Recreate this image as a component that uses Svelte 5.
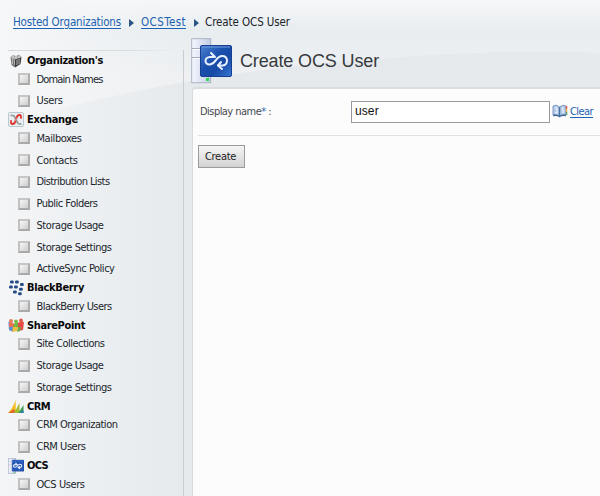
<script>
  const groups = [
    { name: "Organization's", icon: 'org', width: 76, items: [['Domain Names', 66], ['Users', 26]] },
    { name: 'Exchange', icon: 'exchange', width: 51, items: [['Mailboxes', 45], ['Contacts', 41], ['Distribution Lists', 73], ['Public Folders', 61], ['Storage Usage', 67], ['Storage Settings', 75], ['ActiveSync Policy', 78]] },
    { name: 'BlackBerry', icon: 'blackberry', width: 57, items: [['BlackBerry Users', 75]] },
    { name: 'SharePoint', icon: 'sharepoint', width: 58, items: [['Site Collections', 68], ['Storage Usage', 67], ['Storage Settings', 75]] },
    { name: 'CRM', icon: 'crm', width: 23, items: [['CRM Organization', 81], ['CRM Users', 49]] },
    { name: 'OCS', icon: 'ocs', width: 21, items: [['OCS Users', 48]] }
  ];

  function fit(node, width) {
    const natural = node.getBoundingClientRect().width;
    node.style.letterSpacing = `${(width - natural) / node.textContent.length}px`;
  }
</script>

{#snippet ocsIcon(size)}
  <svg width={size} height={size} viewBox="0 0 42 46" preserveAspectRatio="none" aria-hidden="true">
    <defs>
      <linearGradient id="blue{size}" x1="0" y1="0" x2="1" y2="1"><stop stop-color="#4e82d2" /><stop offset=".42" stop-color="#1b50ae" /><stop offset=".65" stop-color="#1749a5" /><stop offset="1" stop-color="#3978d5" /></linearGradient>
      <linearGradient id="server{size}"><stop stop-color="#f5f8ff" /><stop offset="1" stop-color="#c3cde6" /></linearGradient>
    </defs>
    <rect x=".7" y=".7" width="19" height="44" fill="url(#server{size})" stroke="#aab2c2" stroke-width={size < 20 ? 2 : 1} />
    <path d="M1 10.5H19M1 19.5H19" stroke="#a3adbf" /><path d="M2 11.5H19M2 20.5H19" stroke="#fff" />
    <rect x="15" y="40" width="3" height="3" fill="#31dc4f" />
    {#if size < 20}
      <rect x="11" y="6" width="31" height="32" rx="1.5" fill="#2457b8" stroke="#1b449b" />
    {:else}
      <rect x="9.5" y="7.5" width="31" height="31" rx="1.5" fill="url(#blue{size})" stroke="#173f91" />
    {/if}
    <path d="M11 9H39" stroke="#739bdd" />
    <g fill="none" stroke="#e9f0ff" stroke-width={size < 20 ? 3 : 2} stroke-linecap="round" stroke-linejoin="round">
      <path d="M23 19H19C13 19 13 27 19 26.5C25 26 25 18 31 18C38 18 37 27 32 27.5H27" />
      <path d="M20 15L24 19M30 24L27 27.5L31 31" />
    </g>
  </svg>
{/snippet}

{#snippet groupIcon(kind)}
  {#if kind === 'ocs'}
    {@render ocsIcon(16)}
  {:else}
    <svg width="16" height="16" viewBox="0 0 16 16" aria-hidden="true">
      {#if kind === 'org'}
        <path d="M2.5 4L7 6V14.5L3.5 12Z" fill="#777" /><path d="M7 6L13.5 4L12.5 11L7 14.5Z" fill="#3b3b3b" />
        <path d="M2.5 4L5 2L8 3L11 1.5L13.5 4L7 6.5Z" fill="#a5a5a5" />
        <path d="M4.5 5.5V11M6.5 6.5V12M9 6.5V12M11 5.5V11" stroke="#b5b5b5" /><path d="M5 3V6M8 3V6M11 3V5" stroke="#e3e3e3" />
      {:else if kind === 'exchange'}
        <rect x=".5" y=".5" width="15" height="14" rx="1.5" fill="#e9eff1" stroke="#bac9cf" />
        <g fill="none" stroke-linecap="round">
          <path d="M3 3.5H5Q7 4 7.5 7M13 12H11Q9 11 8.5 8.5" stroke="#92999d" stroke-width="1.6" />
          <path d="M8.5 6.5Q9 3 11.5 3Q13.5 3 13 6M7.5 8.5Q7 12 4.5 12Q2.5 12 3 9" stroke="#e13730" stroke-width="1.8" />
          <path d="M6.5 9.5L9.5 5.5" stroke="#d99" stroke-width="1" />
        </g>
      {:else if kind === 'blackberry'}
        <g fill="#244c86"><rect x="2" y=".5" width="3.8" height="3" rx="1.2" /><rect x="7" y=".5" width="3.8" height="3" rx="1.2" /><rect x="1" y="5.5" width="3.8" height="3" rx="1.2" /><rect x="6" y="5.5" width="3.8" height="3" rx="1.2" /><rect x="12" y="3" width="3.8" height="3" rx="1.2" /><rect x="11" y="7.8" width="3.8" height="3" rx="1.2" /><rect x="5" y="10.5" width="3.8" height="3" rx="1.2" /><rect x="10" y="12.3" width="3.8" height="3" rx="1.2" /></g>
      {:else if kind === 'sharepoint'}
        <path d="M0 4Q2 3 4 5L4 13L1 12Z" fill="#8db0df" /><circle cx="3" cy="3" r="2" fill="#ed7b56" /><path d="M1 5Q4 4 7 6L6 10Q4 9 1 10Z" fill="#ec7051" /><path d="M1 9Q4 8 6 10L5 14L1 12Z" fill="#5c8fd7" />
        <circle cx="8" cy="3.5" r="2" fill="#7db94d" /><path d="M6 6Q8 4 11 5L10 10H5Z" fill="#70b746" /><path d="M5 9Q8 9 10 9L9 13L4 14Z" fill="#f0be3f" />
        <circle cx="13" cy="2.5" r="2" fill="#e35b4d" /><path d="M10 5Q13 3 16 4L15 12L10 13Z" fill="#e34d46" /><path d="M10 9H13L12 13L9 14Z" fill="#6da743" />
      {:else}
        <path d="M0 14Q5 9 7.5 1L8 14Z" fill="#f4bd26" /><path d="M0 14L6 10L8 14Z" fill="#df6a31" /><path d="M6 14L11.5 4V14Z" fill="#a5bd35" /><path d="M10 14Q13 10 15.5 6V14Z" fill="#429c55" /><path d="M12 14L15.5 11V14Z" fill="#2878b9" />
      {/if}
    </svg>
  {/if}
{/snippet}

<div class="page">
  <svg class="backdrop" width="600" height="496" viewBox="0 0 600 496" aria-hidden="true">
    <defs>
      <linearGradient id="sky" x2="0" y2="1"><stop stop-color="#f6f7f8" /><stop offset=".06" stop-color="#e8edf0" /><stop offset=".15" stop-color="#eef0f2" /><stop offset="1" stop-color="#edf0f2" /></linearGradient>
      <linearGradient id="left"><stop stop-color="#f4f5f7" /><stop offset=".11" stop-color="#eef1f3" /><stop offset=".32" stop-color="#e5e9ec" /><stop offset="1" stop-color="#e6eaed" /></linearGradient>
      <linearGradient id="edge"><stop stop-color="#f6f7f8" /><stop offset="1" stop-color="#f3f5f6" stop-opacity="0" /></linearGradient>
    </defs>
    <rect width="600" height="496" fill="url(#sky)" />
    <rect width="190" height="130" fill="url(#edge)" />
    <path d="M0 125Q190 70 390 58Q500 49 600 53V496H0Z" fill="url(#left)" />
  </svg>

  <nav class="breadcrumbs">
    <a href="#organizations" use:fit={108}>Hosted Organizations</a><i></i><a href="#test" use:fit={45}>OCSTest</a><i></i><span use:fit={85}>Create OCS User</span>
  </nav>

  <div class="columns">
    <aside>
      {#each groups as group}
        <h2>{@render groupIcon(group.icon)}<span use:fit={group.width}>{group.name}</span></h2>
        {#each group.items as [label, width]}
          <div class="item"><b class="bullet"></b><span use:fit={width}>{label}</span></div>
        {/each}
      {/each}
    </aside>

    <main>
      <header>{@render ocsIcon(42)}<h1><span use:fit={139}>Create OCS User</span></h1></header>
      <section>
        <div class="field">
          <label for="name"><span use:fit={71}>Display name<em>*</em> :</span></label>
          <input id="name" value="user" />
          <svg width="16" height="15" viewBox="0 0 16 15" aria-hidden="true"><path d="M1 2Q5 0 7.5 3Q11 0 14 2V11Q10 10 7.5 12Q5 10 1 11Z" fill="#b4cbea" stroke="#7f9cc4" /><path d="M1 11.5Q5 10.5 7.5 12.5Q10 10.5 14 11.5" fill="none" stroke="#40669b" stroke-width="1.5" /><path d="M7.5 3V12" stroke="#4a709f" stroke-width="1.5" /><path d="M3 4H5V9H3M10 4H11V9" fill="none" stroke="#f5faff" /><path d="M14.5 2V5" stroke="#de5953" stroke-width="1.5" /><path d="M14.5 5V8" stroke="#e1b34b" stroke-width="1.5" /><path d="M14.5 8V11" stroke="#579b64" stroke-width="1.5" /></svg>
          <a href="#clear" use:fit={23}>Clear</a>
        </div>
        <button><span use:fit={31}>Create</span></button>
      </section>
    </main>
  </div>
</div>

<style>
  :global(body) { overflow: hidden; }
  * { box-sizing: border-box; }
  .page { position: relative; width: 600px; height: 496px; overflow: hidden; font: 11px/14px "DejaVu Sans Condensed", "DejaVu Sans", sans-serif; color: #20252c; font-stretch: condensed; }
  .page > svg { position: absolute; inset: 0; }
  .breadcrumbs, .columns { position: relative; }
  span, a { white-space: nowrap; }
  a { color: #1c62b2; text-decoration: underline; text-underline-offset: 2px; }
  .breadcrumbs { display: flex; align-items: center; height: 38px; padding: 5px 0 0 13px; font-size: 11.5px; }
  .breadcrumbs i { width: 5px; height: 8px; margin: 3px 7px 0 8px; background: #285585; clip-path: polygon(0 0, 100% 50%, 0 100%); }
  .breadcrumbs i + span { margin-left: -1px; }
  .columns { display: flex; height: 458px; }
  aside { width: 184px; flex: none; margin-top: 12px; padding: 3px 0 0 8px; border-right: 1px solid #c7cfd5; background: linear-gradient(90deg, #d1d7db, #d8dde0 70%, transparent) 8px 0 / 172px 1px no-repeat; }
  h2 { display: flex; align-items: center; gap: 3px; height: 15.75px; margin: 0; font-size: 11px; color: #090909; }
  h2 svg { flex: none; }
  .item { display: flex; align-items: center; gap: 6.5px; height: 21.75px; padding-left: 10px; }
  .bullet { width: 12px; height: 12px; margin-top: -1px; border: 2px solid; border-color: #c6c6c6 #adadad #a9a9a9 #c1c1c1; background: linear-gradient(135deg, #f6f6f6, #cecece); }
  main { width: 409px; margin-left: 7px; display: flex; flex-direction: column; }
  header { display: flex; height: 49px; }
  header svg { width: 42px; height: 46px; }
  h1 { margin: 13px 0 0 7px; font: 18px/20px "Liberation Sans", sans-serif; color: #363a3d; }
  section { flex: 1; margin-left: 1px; border: 1px solid #d5dbdf; border-width: 1px 0 0 1px; border-top: 2px solid #d8dde0; border-radius: 4px 0 0 0; background: #fcfcfc; padding-left: 5px; }
  .field { display: flex; align-items: center; height: 47px; border-bottom: 1px solid #e0e2e4; }
  label { width: 153px; padding-left: 2px; color: #454a51; }
  label em { color: #3568a8; font-style: normal; }
  input { width: 199px; height: 22px; margin: 0 2px 0 0; padding: 0 3px 2px 3px; border: 1px solid #959ba1; background: white; font: 12px "Liberation Sans", sans-serif; letter-spacing: .1px; color: #111; }
  .field svg { margin-top: -2px; }
  .field a { margin-left: 2px; }
  button { display: block; width: 47px; height: 23px; margin-top: 9px; padding: 1px 6px 0; border: 1px solid #9b9b9b; background: linear-gradient(#f5f5f5, #e6e6e6 45%, #d3d3d3); font: inherit; text-align: left; color: #222; }
</style>
